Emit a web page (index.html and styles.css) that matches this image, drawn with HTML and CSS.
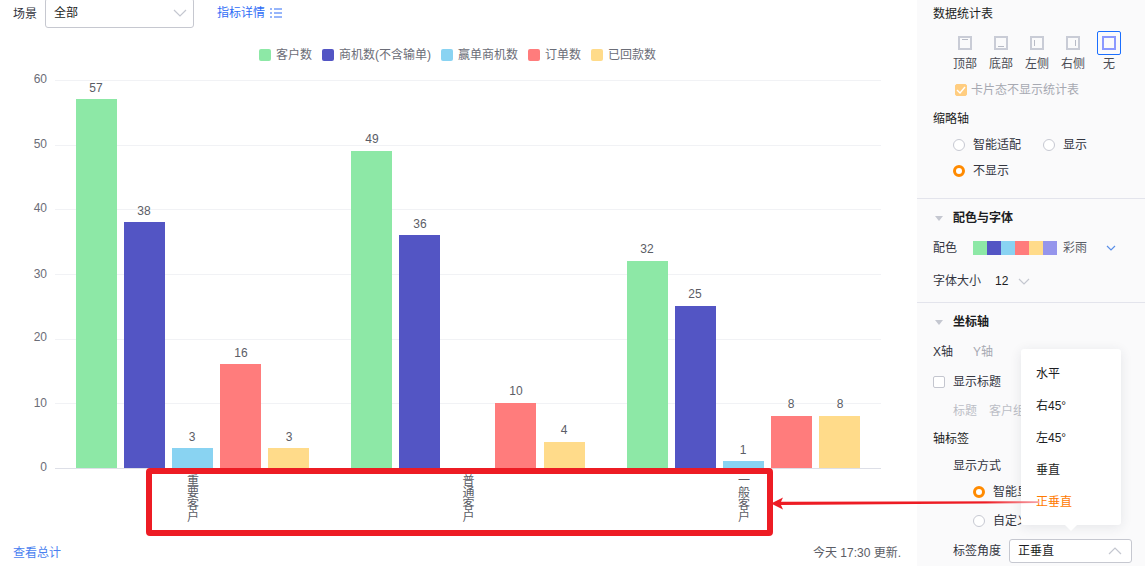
FILE: index.html
```html
<!DOCTYPE html>
<html lang="zh">
<head>
<meta charset="utf-8">
<title>数据统计表</title>
<link rel="stylesheet" href="styles.css">
</head>
<body>
<div class="page">
  <main class="main">
    <div class="filter">
      <span class="filter-label">场景</span>
      <div class="select scene"><span>全部</span><svg class="chev" width="14" height="8" viewBox="0 0 14 8"><path d="M1 1l6 6 6-6"/></svg></div>
      <a class="link">指标详情<svg class="list-ic" width="12" height="10" viewBox="0 0 12 10"><path d="M0 1h2M4 1h8M0 5h2M4 5h8M0 9h2M4 9h8"/></svg></a>
    </div>
    <div class="legend">
      <span class="lg"><i class="c1"></i>客户数</span>
      <span class="lg"><i class="c2"></i>商机数(不含输单)</span>
      <span class="lg"><i class="c3"></i>赢单商机数</span>
      <span class="lg"><i class="c4"></i>订单数</span>
      <span class="lg"><i class="c5"></i>已回款数</span>
    </div>
    <svg class="chart" width="917" height="470" viewBox="0 70 917 470">
      <g class="grid">
        <path d="M55 80.5H881M55 145.5H881M55 209.5H881M55 274.5H881M55 339.5H881M55 403.5H881"/>
      </g>
      <path class="axis" d="M55 468.5H881"/>
      <g class="ticks">
        <text x="47" y="83">60</text><text x="47" y="148">50</text><text x="47" y="212">40</text><text x="47" y="278">30</text><text x="47" y="341">20</text><text x="47" y="407">10</text><text x="47" y="471">0</text>
      </g>
      <g class="s1">
        <rect x="76" y="99" width="41" height="369"/><rect x="351" y="151" width="41" height="317"/><rect x="627" y="261" width="41" height="207"/>
      </g>
      <g class="s2">
        <rect x="124" y="222" width="41" height="246"/><rect x="399" y="235" width="41" height="233"/><rect x="675" y="306" width="41" height="162"/>
      </g>
      <g class="s3">
        <rect x="172" y="448" width="41" height="20"/><rect x="723" y="461" width="41" height="7"/>
      </g>
      <g class="s4">
        <rect x="220" y="364" width="41" height="104"/><rect x="495" y="403" width="41" height="65"/><rect x="771" y="416" width="41" height="52"/>
      </g>
      <g class="s5">
        <rect x="268" y="448" width="41" height="20"/><rect x="544" y="442" width="41" height="26"/><rect x="819" y="416" width="41" height="52"/>
      </g>
      <g class="vals">
        <text x="96" y="92">57</text><text x="144" y="215">38</text><text x="192" y="441">3</text><text x="241" y="357">16</text><text x="289" y="441">3</text>
        <text x="372" y="143">49</text><text x="420" y="228">36</text><text x="516" y="395">10</text><text x="564" y="434">4</text>
        <text x="647" y="253">32</text><text x="695" y="298">25</text><text x="743" y="454">1</text><text x="791" y="408">8</text><text x="840" y="408">8</text>
      </g>
      <g class="cats">
        <text x="191.5" y="474">重要客户</text><text x="467" y="474">普通客户</text><text x="742.5" y="474">一般客户</text>
      </g>
    </svg>
    <div class="foot"><a class="total">查看总计</a><span class="updated">今天 17:30 更新.</span></div>
  </main>

  <aside class="panel">
    <section class="sec first">
      <h4 class="ttl">数据统计表</h4>
      <div class="pos">
        <div class="pos-item"><span class="pos-box"><svg width="14" height="14" viewBox="0 0 14 14"><path d="M1 1h12v12H1z"/><path class="in" d="M4 3.500h6"/></svg></span>顶部</div>
        <div class="pos-item"><span class="pos-box"><svg width="14" height="14" viewBox="0 0 14 14"><path d="M1 1h12v12H1z"/><path class="in" d="M4 10.500h6"/></svg></span>底部</div>
        <div class="pos-item"><span class="pos-box"><svg width="14" height="14" viewBox="0 0 14 14"><path d="M1 1h12v12H1z"/><path class="in" d="M4.500 4v6"/></svg></span>左侧</div>
        <div class="pos-item"><span class="pos-box"><svg width="14" height="14" viewBox="0 0 14 14"><path d="M1 1h12v12H1z"/><path class="in" d="M9.500 4v6"/></svg></span>右侧</div>
        <div class="pos-item"><span class="pos-box on"><svg width="14" height="14" viewBox="0 0 14 14"><path d="M1 1h12v12H1z"/></svg></span>无</div>
      </div>
      <label class="card-check"><span class="cb checked"><svg width="10" height="8" viewBox="0 0 10 8"><path d="M1 4l3 3 5-6"/></svg></span>卡片态不显示统计表</label>
      <div class="sub">缩略轴</div>
      <div class="radios r1"><span class="radio"><i class="dot"></i>智能适配</span><span class="radio"><i class="dot"></i>显示</span></div>
      <div class="radios r2"><span class="radio"><i class="dot on"></i>不显示</span></div>
    </section>

    <section class="sec">
      <h4 class="ttl tw"><i class="tri"></i>配色与字体</h4>
      <div class="row color">
        <span>配色</span>
        <span class="swatches"><i class="c1"></i><i class="c2"></i><i class="c3"></i><i class="c4"></i><i class="c5"></i><i class="c6"></i></span>
        <span class="cname">彩雨</span>
        <svg class="chev blue" width="10" height="6" viewBox="0 0 10 6"><path d="M1 1l4 4 4-4"/></svg>
      </div>
      <div class="row size"><span>字体大小</span><span class="num">12</span><svg class="chev" width="12" height="7" viewBox="0 0 12 7"><path d="M1 1l5 5 5-5"/></svg></div>
    </section>

    <section class="sec last">
      <h4 class="ttl tw"><i class="tri"></i>坐标轴</h4>
      <div class="tabs"><span>X轴</span><span class="off">Y轴</span></div>
      <label class="showtitle"><span class="cb"></span>显示标题</label>
      <div class="titlerow"><span>标题</span><span>客户组</span></div>
      <div class="sub axis-l">轴标签</div>
      <div class="ind mode">显示方式</div>
      <div class="radio deep d1"><i class="dot on"></i>智能显示</div>
      <div class="radio deep d2"><i class="dot"></i>自定义</div>
      <div class="ind angle"><span>标签角度</span>
        <div class="select angle-sel"><span>正垂直</span><svg class="chev" width="14" height="8" viewBox="0 0 14 8"><path d="M1 7l6-6 6 6"/></svg></div>
      </div>
    </section>
  </aside>

  <div class="menu">
    <div class="opt">水平</div><div class="opt">右45°</div><div class="opt">左45°</div><div class="opt">垂直</div><div class="opt sel">正垂直</div>
  </div>

  <div class="redbox"></div>
  <svg class="arrow" width="270" height="16" viewBox="0 0 270 16">
    <defs><linearGradient id="fade" x1="0" x2="1" y1="0" y2="0"><stop offset="0" stop-color="#ed1c24"/><stop offset=".8" stop-color="#ed1c24"/><stop offset="1" stop-color="#f7a3a8"/></linearGradient></defs>
    <path fill="url(#fade)" d="M0 8.500L12 2.500 10 6.800 268 6.300V8L10 10 12 14.500z"/>
  </svg>
</div>
</body>
</html>
```

FILE: styles.css
```css
* { box-sizing: border-box; }
html, body { margin: 0; height: 566px; overflow: hidden; background: #fff; }
body { font: 12px/18px "Liberation Sans", "Noto Sans CJK SC", sans-serif; color: #33353f; }
i { display: block; font-style: normal; }
h4 { margin: 0; font-size: 12px; font-weight: 400; }

.page { position: relative; display: flex; width: 1145px; height: 566px; overflow: hidden; }
.main { width: 917px; flex: none; display: flex; flex-direction: column; }

.filter { display: flex; align-items: center; height: 28px; padding-left: 13px; }
.filter-label { margin-right: 8px; }
.select { display: flex; align-items: center; justify-content: space-between; border: 1px solid #c6c8d0; border-radius: 3px; background: #fff; color: #1c1d22; }
.scene { width: 149px; height: 30px; margin-top: -2px; padding: 0 6px 0 8px; }
.chev { fill: none; stroke: #c4c7d0; stroke-width: 1.2; flex: none; }
.chev.blue { stroke: #5a8fe8; }
.link { display: flex; align-items: center; gap: 5px; margin-left: 23px; color: #2f6df6; margin-top: -3px; }
.list-ic { fill: none; stroke: #2f6df6; stroke-width: 1; }

.legend { display: flex; justify-content: center; gap: 10px; margin-top: 18px; height: 18px; padding-right: 2px; color: #6b6d77; }
.lg { display: flex; align-items: center; gap: 5px; }
.lg i { width: 12px; height: 12px; border-radius: 2px; }
.c1 { background: #8de8a6; } .c2 { background: #5355c4; } .c3 { background: #89d3f2; }
.c4 { background: #ff7c7c; } .c5 { background: #ffdb8a; } .c6 { background: #9595ec; }

.chart { display: block; margin-top: 6px; flex: none; font-size: 12px; }
.chart .grid path { stroke: #f1f2f5; fill: none; }
.chart .axis { stroke: #dddfe7; fill: none; }
.ticks text { text-anchor: end; fill: #6b6d77; }
.vals text { text-anchor: middle; fill: #5b5d66; }
.cats text { writing-mode: vertical-rl; fill: #5b5d66; }
.s1 { fill: #8de8a6; } .s2 { fill: #5355c4; } .s3 { fill: #89d3f2; } .s4 { fill: #ff7c7c; } .s5 { fill: #ffdb8a; }

.foot { display: flex; justify-content: space-between; padding: 4px 16px 0 13px; }
.total { color: #4a7ff0; }
.updated { color: #5b5d66; }

.panel { width: 228px; flex: none; background: #fafafb; font-size: 12px; }
.sec { border-bottom: 1px solid #e3e4ec; padding: 10px 0 0 16px; height: 104px; }
.sec.first { height: 199px; padding-top: 5px; }
.sec.last { border: 0; height: auto; }
.ttl { color: #1c1d22; }
.tw { font-weight: 700; display: flex; align-items: center; }
.tri { width: 0; height: 0; border: 4px solid transparent; border-top: 5px solid #c4c7d0; border-bottom: 0; margin: 0 10px 0 2px; }

.pos { display: flex; margin: 8px 0 0 14px; width: 180px; }
.pos-item { width: 36px; display: flex; flex-direction: column; align-items: center; color: #4a4c55; line-height: 16px; }
.pos-box { width: 24px; height: 24px; display: flex; align-items: center; justify-content: center; border: 1px solid transparent; border-radius: 2px; margin-bottom: 1px; }
.pos-box svg { fill: none; stroke: #c9ccd6; stroke-width: 2; }
.pos-box .in { stroke-width: 1; stroke: #b8bbc6; }
.pos-box.on { border-color: #1b6fff; }
.pos-box.on svg { stroke: #8b99ff; }

.card-check { display: flex; align-items: center; gap: 4px; margin: 9px 0 0 22px; color: #a7a9b2; }
.cb { width: 12px; height: 12px; border: 1px solid #c4c6cf; border-radius: 2px; background: #fff; display: flex; align-items: center; justify-content: center; }
.cb.checked { background: #ffcd80; border-color: #ffcd80; }
.cb svg { fill: none; stroke: #fff; stroke-width: 1.4; }

.sub { margin-top: 11px; color: #1c1d22; }
.radios { display: flex; margin-left: 20px; height: 26px; align-items: center; }
.r1 { margin-top: 4px; gap: 22px; }
.radio { display: flex; align-items: center; gap: 8px; color: #33353f; }
.dot { width: 12px; height: 12px; border: 1px solid #c7c9d2; border-radius: 50%; background: #fff; }
.dot.on { border: 3px solid #ff8a00; }

.row { display: flex; align-items: center; height: 18px; }
.color { margin-top: 12px; }
.swatches { display: flex; margin-left: 16px; }
.swatches i { width: 14px; height: 14px; }
.cname { margin-left: 6px; color: #5b5d66; }
.color .chev { margin-left: 19px; }
.size { margin-top: 15px; }
.num { margin-left: 14px; color: #1c1d22; }
.size .chev { margin-left: 10px; }

.tabs { display: flex; gap: 20px; margin-top: 12px; color: #33353f; }
.off { color: #a7a9b2; }
.showtitle { display: flex; align-items: center; gap: 8px; margin-top: 12px; }
.titlerow { display: flex; gap: 12px; margin: 11px 0 0 20px; color: #bcbec6; }
.axis-l { margin-top: 10px; }
.ind { margin-left: 20px; }
.mode { margin-top: 9px; }
.deep { margin-left: 40px; }
.d1 { margin-top: 8px; }
.d2 { margin-top: 11px; }
.angle { display: flex; align-items: center; margin-top: 9px; gap: 8px; }
.angle-sel { width: 123px; height: 24px; padding: 0 9px 0 8px; }

.menu { position: absolute; left: 1021px; top: 349px; width: 100px; height: 176px; padding: 9px 0; background: #fff; border-radius: 3px; box-shadow: 0 2px 12px rgba(40, 45, 70, .1); }
.menu::after { content: ""; position: absolute; left: 44px; bottom: -6px; border: 6px solid transparent; border-top-color: #fff; border-bottom: 0; }
.opt { height: 32px; line-height: 32px; padding-left: 15px; color: #1c1d22; }
.opt.sel { color: #ff7a00; }

.redbox { position: absolute; left: 146px; top: 468px; width: 627px; height: 68px; border: 6px solid #ed1c24; border-radius: 4px; }
.arrow { position: absolute; left: 771px; top: 495px; }
```
